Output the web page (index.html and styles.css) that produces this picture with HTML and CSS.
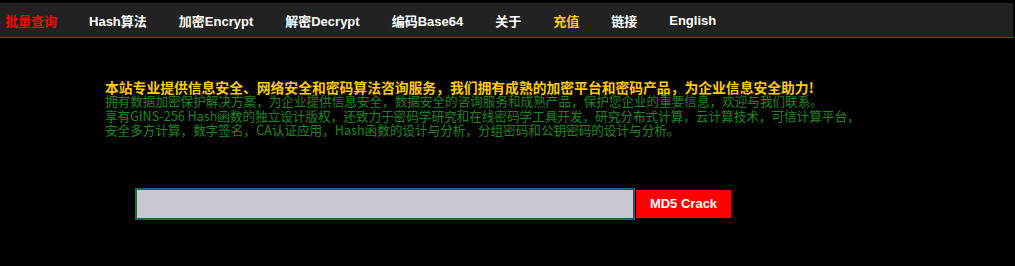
FILE: index.html
```html
<!DOCTYPE html>
<html lang="zh-CN">

<head>
  <meta charset="UTF-8">
  <meta name="viewport" content="width=device-width, initial-scale=1.0">
  <title>MD5 Crack</title>

  <link rel="stylesheet" href="styles.css">
</head>

<body>
  <div class="nav">
    <a class="nav-item hot" href="#">批量查询</a>
    <a class="nav-item" href="#">Hash算法</a>
    <a class="nav-item" href="#">加密Encrypt</a>
    <a class="nav-item" href="#">解密Decrypt</a>
    <a class="nav-item" href="#">编码Base64</a>
    <a class="nav-item" href="#">关于</a>
    <a class="nav-item pay" href="#">充值</a>
    <a class="nav-item" href="#">链接</a>
    <a class="nav-item" href="#">English</a>
  </div>

  <div class="intro">
    <p class="lead">本站专业提供信息安全、网络安全和密码算法咨询服务，我们拥有成熟的加密平台和密码产品，为企业信息安全助力!</p>
    <p>拥有数据加密保护解决方案，为企业提供信息安全，数据安全的咨询服务和成熟产品，保护您企业的重要信息，欢迎与我们联系。</p>
    <p>享有GINS-256 Hash函数的独立设计版权，还致力于密码学研究和在线密码学工具开发，研究分布式计算，云计算技术，可信计算平台，<br>安全多方计算，数字签名，CA认证应用，Hash函数的设计与分析，分组密码和公钥密码的设计与分析。</p>
  </div>

  <form class="crack-form">
    <input class="crack-input" type="text" name="hash">
    <button class="crack-btn" type="submit">MD5 Crack</button>
  </form>
</body>

</html>
```

FILE: styles.css
```css
body {
  margin: 0;
  background-color: #000;
  font-family: "Noto Sans CJK SC", "Liberation Sans", sans-serif;
  width: 1013px;
}

.nav {
  display: flex;
  align-items: center;
  margin-top: 3px;
  height: 34px;
  padding-left: 5px;
  background-color: #222;
  border-bottom: 1px solid #ff0000;
}

.nav-item {
  margin-right: 32px;
  color: #fff;
  font-family: "Liberation Sans", "Noto Sans CJK SC", sans-serif;
  font-size: 13px;
  font-weight: 700;
  text-decoration: none;
}

.nav-item.hot {
  color: #ff0000;
}

.nav-item.pay {
  color: #ffcc00;
}

.intro {
  padding: 42px 0 0 105px;
  font-size: 12.6px;
  line-height: 14.4px;
  color: #1a8a1a;
  white-space: nowrap;
}

.intro p {
  margin: 0;
}

.intro .lead {
  color: #ffcc00;
  font-size: 13.8px;
  font-weight: 700;
}

.crack-form {
  display: flex;
  align-items: center;
  margin: 50px 0 0 135px;
}

.crack-input {
  box-sizing: border-box;
  width: 500px;
  height: 32px;
  margin: 0;
  padding: 0 6px;
  background-color: #c8c8d2;
  border: 2px solid #0f6e2a;
  outline: 1px solid #2a5a8a;
  outline-offset: -1px;
}

.crack-btn {
  width: 95px;
  height: 28px;
  margin-left: 1px;
  background-color: #ff0000;
  color: #fff;
  border: none;
  font-family: "Liberation Sans", sans-serif;
  font-size: 13px;
  font-weight: 700;
  cursor: pointer;
}
```
